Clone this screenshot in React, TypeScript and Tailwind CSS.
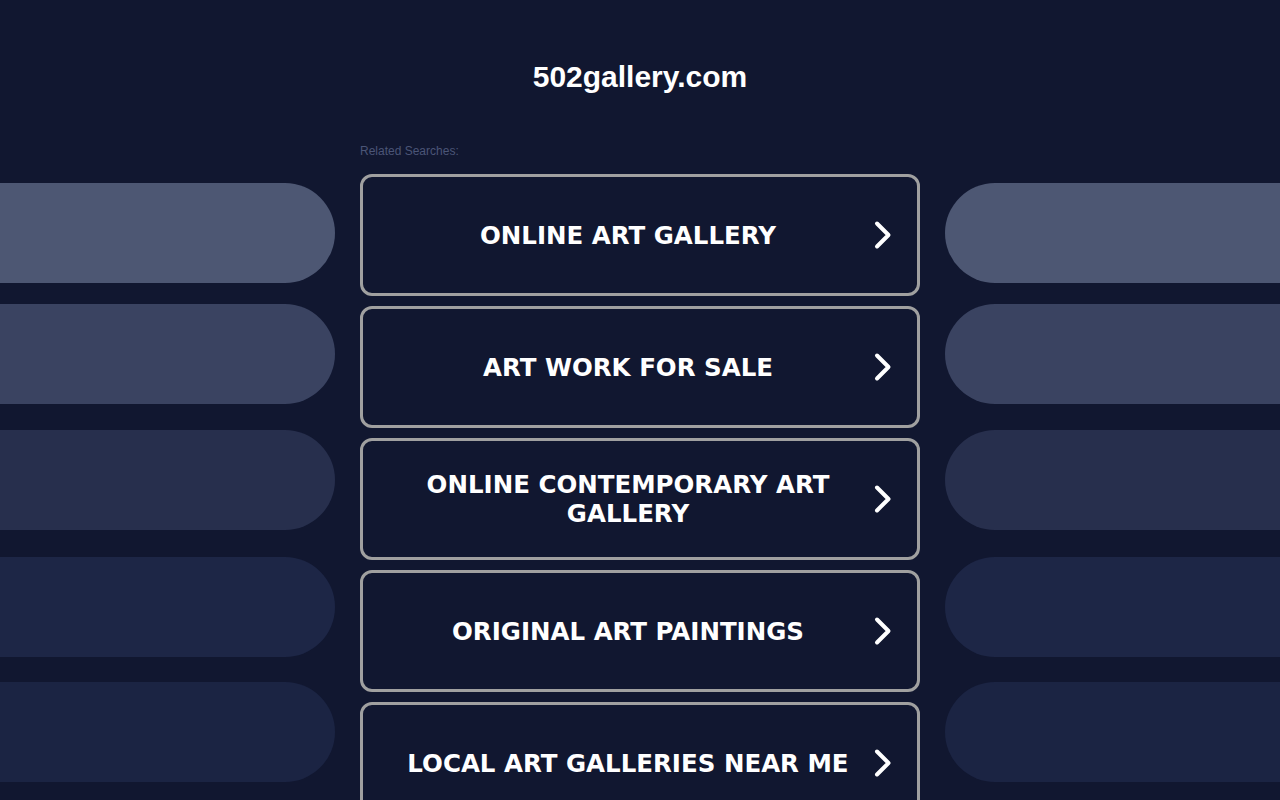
import React from "react"

const searches = [
  "ONLINE ART GALLERY",
  "ART WORK FOR SALE",
  "ONLINE CONTEMPORARY ART GALLERY",
  "ORIGINAL ART PAINTINGS",
  "LOCAL ART GALLERIES NEAR ME",
]

const pills = [
  { color: "bg-[#4d5773]", gap: "mt-[183px]" },
  { color: "bg-[#3a4361]", gap: "mt-[21px]" },
  { color: "bg-[#272f4d]", gap: "mt-[26px]" },
  { color: "bg-[#1d2646]", gap: "mt-[27px]" },
  { color: "bg-[#1b2443]", gap: "mt-[25px]" },
]

function Chevron() {
  return (
    <svg width="24" height="30" viewBox="0 0 24 30" fill="none" className="shrink-0">
      <path
        d="M4 3.5 L15.5 15 L4 26.5"
        stroke="white"
        strokeWidth="4"
        strokeLinecap="round"
        strokeLinejoin="round"
      />
    </svg>
  )
}

function SideColumn(props: { side: "left" | "right" }) {
  return (
    <div className="flex w-[335px] shrink-0 flex-col">
      {pills.map((p, i) => (
        <div
          key={i}
          className={`${p.gap} h-[100px] ${p.color} ${
            props.side === "left" ? "rounded-r-[50px]" : "rounded-l-[50px]"
          }`}
        />
      ))}
    </div>
  )
}

export default function App() {
  return (
    <div className="h-[800px] w-[1280px] overflow-hidden bg-[#111730] font-['Liberation_Sans',Arial,sans-serif]">
      <div className="flex justify-between">
        <SideColumn side="left" />

        <div className="flex w-[560px] shrink-0 flex-col">
          <h1 className="mt-[58px] h-[38px] text-center text-[30px] font-bold leading-[38px] text-white">
            502gallery.com
          </h1>
          <div className="mt-[48px] h-[14px] text-[12px] leading-[14px] text-[#4b5577]">
            Related Searches:
          </div>
          <div className="mt-[16px] flex flex-col gap-[10px]">
            {searches.map((s) => (
              <a
                key={s}
                href="#"
                className="flex h-[122px] items-center rounded-[12px] border-[3px] border-[#a0a0a0] pl-5 pr-5"
              >
                <span className="flex-1 text-center font-['DejaVu_Sans',Verdana,sans-serif] text-[24.5px] font-bold leading-[29px] text-white">
                  {s}
                </span>
                <Chevron />
              </a>
            ))}
          </div>
        </div>

        <SideColumn side="right" />
      </div>
    </div>
  )
}
